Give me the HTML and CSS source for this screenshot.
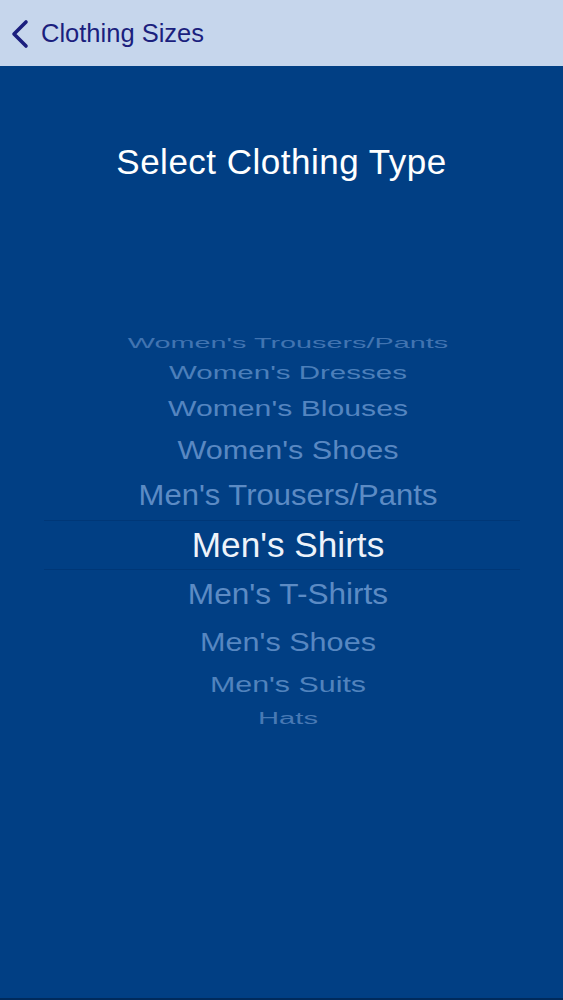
FILE: index.html
```html
<!DOCTYPE html>
<html>
<head>
<meta charset="utf-8">
<link rel="stylesheet" href="styles.css">
</head>
<body>
<header class="nav">
  <svg class="chev" width="20" height="30" viewBox="0 0 20 30"><polyline points="15,3 3,15 15,27" fill="none" stroke="#1b1f7e" stroke-width="3.6" stroke-linecap="round" stroke-linejoin="round"/></svg>
  <span class="nav-title">Clothing Sizes</span>
</header>
<main class="screen">
  <h1 class="title">Select Clothing Type</h1>
  <div class="picker">
    <div class="row r1"><span>Women's Trousers/Pants</span></div>
    <div class="row r2"><span>Women's Dresses</span></div>
    <div class="row r3"><span>Women's Blouses</span></div>
    <div class="row r4"><span>Women's Shoes</span></div>
    <div class="row r5"><span>Men's Trousers/Pants</span></div>
    <div class="row sel"><span>Men's Shirts</span></div>
    <div class="row r7"><span>Men's T-Shirts</span></div>
    <div class="row r8"><span>Men's Shoes</span></div>
    <div class="row r9"><span>Men's Suits</span></div>
    <div class="row r10"><span>Hats</span></div>
  </div>
</main>
</body>
</html>
```
FILE: styles.css
```css
html, body {
  margin: 0;
  padding: 0;
}
body {
  width: 563px;
  height: 1000px;
  overflow: hidden;
  font-family: "Liberation Sans", Arial, sans-serif;
  background: #013f84;
}
.nav {
  height: 66px;
  background: #c6d6ec;
  display: flex;
  align-items: center;
  box-sizing: border-box;
  padding-left: 11px;
}
.chev {
  display: block;
  margin-top: 2px;
}
.nav-title {
  margin-left: 10px;
  font-size: 25.5px;
  color: #1b1f7e;
  margin-top: 1px;
}
.screen {
  height: 934px;
  background: #013f84;
  display: flex;
  flex-direction: column;
  align-items: center;
  box-sizing: border-box;
  padding-top: 76px;
  border-bottom: 2px solid #002a5c;
}
.title {
  margin: 0;
  font-weight: normal;
  font-size: 35px;
  line-height: 40px;
  height: 40px;
  color: #ffffff;
  letter-spacing: 0.5px;
}
.picker {
  margin-top: 147px;
  width: 100%;
  box-sizing: border-box;
  padding-left: 13px;
  display: flex;
  flex-direction: column;
  align-items: center;
  position: relative;
}
.row {
  width: 100%;
  display: flex;
  justify-content: center;
  align-items: center;
  color: #5a8cc6;
  white-space: nowrap;
}
.row span {
  display: block;
}
.r1 { height: 28px; font-size: 28.8px; color: #4174b1; }
.r1 span { transform: scaleY(0.5); }
.r2 { height: 31px; font-size: 29.5px; color: #4c7fba; }
.r2 span { transform: scaleY(0.62); }
.r3 { height: 39px; font-size: 30.2px; color: #5485c0; }
.r3 span { transform: scaleY(0.75); }
.r4 { height: 44px; font-size: 30.6px; color: #5988c2; }
.r4 span { transform: scaleY(0.87); }
.r5 { height: 49px; font-size: 31px; color: #5c8bc4; }
.r5 span { transform: scaleY(0.93); }
.sel {
  height: 50px;
  font-size: 35.2px;
  color: #eef3fa;
  position: relative;
}
.sel::before, .sel::after {
  content: "";
  position: absolute;
  left: 31px;
  right: 43px;
  height: 1px;
  background: rgba(0, 20, 60, 0.18);
}
.sel::before { top: 0; }
.sel::after { bottom: 0; }
.r7 { height: 48px; font-size: 31.6px; color: #5c8bc4; }
.r7 span { transform: scaleY(0.93); }
.r8 { height: 46px; font-size: 30.6px; color: #5787c1; }
.r8 span { transform: scaleY(0.86); }
.r9 { height: 40px; font-size: 30.4px; color: #5183bd; }
.r9 span { transform: scaleY(0.7); }
.r10 { height: 28px; font-size: 29.2px; color: #4879b4; }
.r10 span { transform: scaleY(0.57); }
```
